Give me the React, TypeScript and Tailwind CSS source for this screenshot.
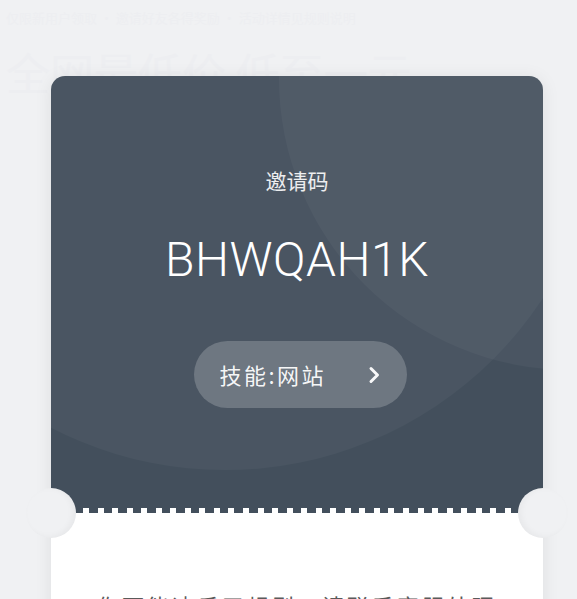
import React from 'react'

// 邀请码卡片：深色票券上半部分 + 锯齿分割 + 白色说明区
const TEETH = Array.from({ length: 30 })

export default function App() {
    return (
        <div className="relative min-h-screen overflow-hidden bg-[#f0f1f3] font-['Noto_Sans_CJK_SC','Noto_Sans',sans-serif]">
            {/* 背景里若隐若现的页面文字 */}
            <div className="pointer-events-none absolute left-[6px] top-[8px] select-none">
                <div className="text-[13px] leading-[20px] text-[#edeef1]">仅限新用户领取 · 邀请好友各得奖励 · 活动详情见规则说明</div>
                <div className="mt-[18px] text-[44px] leading-[52px] text-[#edeef1]">全网最低价 低至一元</div>
            </div>

            <div className="relative ml-[51px] mt-[76px] w-[492px] rounded-t-[14px] shadow-[0_2px_18px_rgba(0,0,0,0.08)]">
                {/* 深色上半部分 */}
                <div className="relative h-[437px] overflow-hidden rounded-t-[14px] bg-[#434f5c]">
                    {/* 装饰圆 */}
                    <div className="absolute left-[-206px] top-[-366px] h-[760px] w-[760px] rounded-full bg-white/[0.035]" />
                    <div className="absolute left-[228px] top-[-290px] h-[584px] w-[584px] rounded-full bg-white/[0.035]" />

                    <div className="relative flex flex-col items-center pt-[92px] text-white">
                        <div className="text-[21px] leading-[24px] text-white/90">邀请码</div>
                        <div className="mt-[40px] font-['Roboto',sans-serif] text-[48px] font-light leading-[56px] tracking-[0.5px]">
                            BHWQAH1K
                        </div>
                        <button className="ml-[6px] mt-[53px] flex h-[67px] w-[213px] items-center rounded-full bg-white/20 pl-[26px] pr-[26px] text-[22px] text-white/95">
                            <span className="tracking-[2.5px]">技能:网站</span>
                            <svg className="ml-auto" width="14" height="18" viewBox="0 0 14 18" fill="none" stroke="currentColor" strokeWidth="3" strokeLinecap="round" strokeLinejoin="round">
                                <path d="M4 2.5 L10.5 9 L4 15.5" />
                            </svg>
                        </button>
                    </div>

                    {/* 锯齿 */}
                    <div className="absolute bottom-0 left-[32px] right-[32px] flex justify-between">
                        {TEETH.map((_, i) => (
                            <div key={i} className="h-[5px] w-[6px] bg-white" />
                        ))}
                    </div>
                </div>

                {/* 白色下半部分 */}
                <div className="h-[200px] bg-white pt-[77px] text-center">
                    <div className="text-[22px] leading-[30px] tracking-[3px] text-[#5a5a5a]">你可能违反了规则，请联系客服处理</div>
                </div>

                {/* 两侧缺口 */}
                <div className="absolute left-[-25px] top-[412px] h-[50px] w-[50px] rounded-full bg-[#f0f1f3] shadow-[inset_-3px_-1px_6px_rgba(0,0,0,0.04)]" />
                <div className="absolute right-[-25px] top-[412px] h-[50px] w-[50px] rounded-full bg-[#f0f1f3] shadow-[inset_3px_-1px_6px_rgba(0,0,0,0.04)]" />
            </div>
        </div>
    )
}
